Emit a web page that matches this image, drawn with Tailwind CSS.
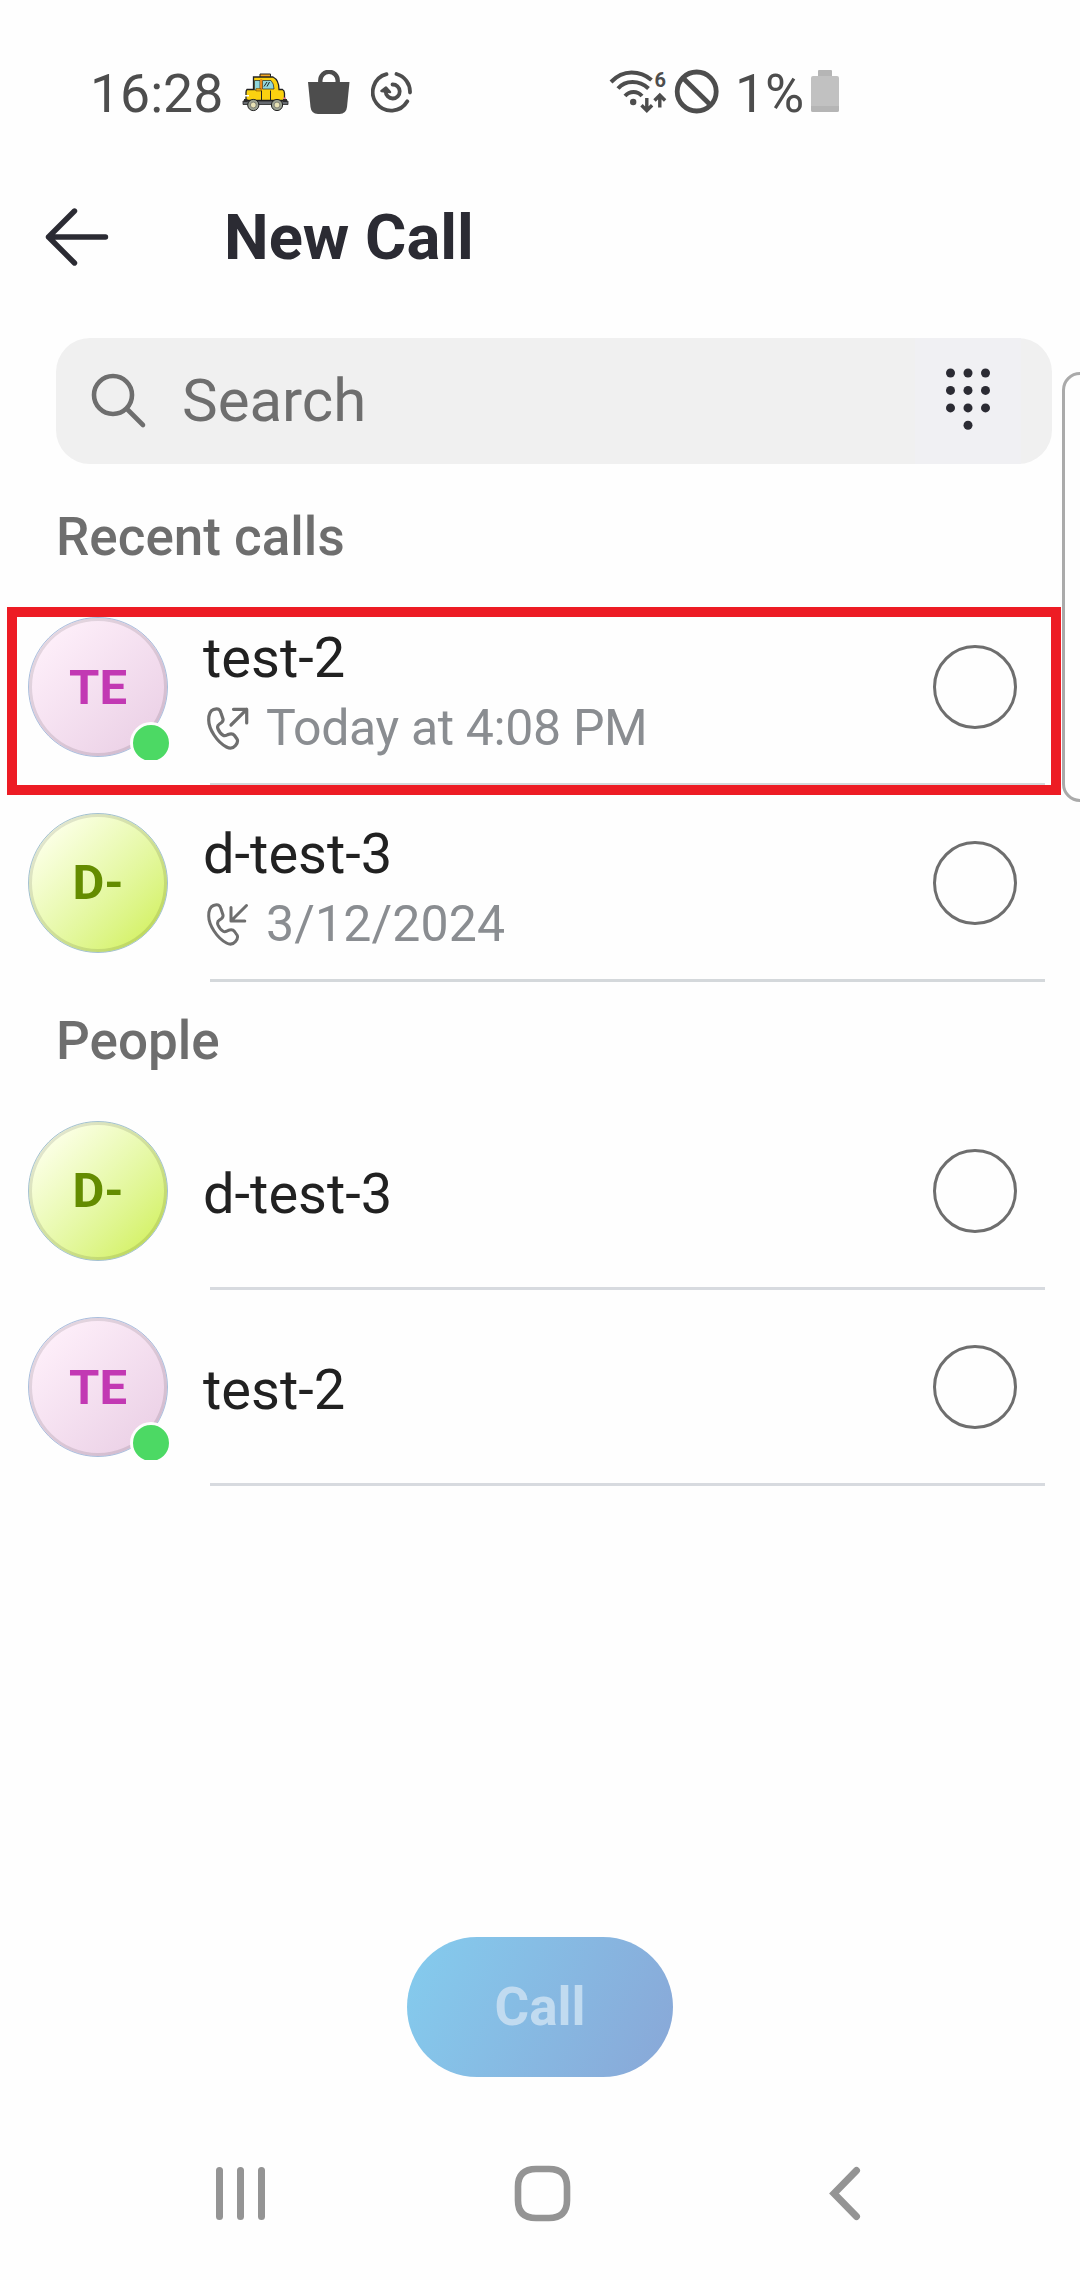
<!DOCTYPE html>
<html lang="en">
<head>
<meta charset="utf-8">
<title>New Call</title>
<script src="https://cdn.jsdelivr.net/npm/@tailwindcss/browser@4"></script>
</head>
<body class="bg-[#fefefe]">
<div class="relative flex h-[2280px] w-[1080px] flex-col overflow-hidden bg-[#fefefe] font-['Roboto',sans-serif]">

  <!-- Status bar -->
  <div class="flex h-[138px] shrink-0 pt-[62px] pl-[90px] text-[53.500px] leading-[64px] text-[#4d4d4d]">
    <span class="w-[152px] shrink-0">16:28</span>
    <svg class="mt-[10px] mr-[19px] h-[40px] w-[47px] shrink-0" viewBox="0 0 47 40">
      <path d="M18 5.500V2h10.500v3.500" fill="#f5a623" stroke="#222" stroke-width="1"/>
      <path d="M5 17.500h6.500V5H31q6 3 6 12.500h3.500q2 1 2 4V28.500H4v-8q0-2 1-3z" fill="#fbd110" stroke="#222" stroke-width="1.300"/>
      <path d="M12.500 8.500H18v9.500h-5.500zM20.500 8.500H29q3 3 3 8.500H20.500z" fill="#8fd6dc" stroke="#222" stroke-width=".7"/>
      <path d="M19.200 7v11" stroke="#f08a1c" stroke-width="2"/>
      <path d="M22 14.500l3-4.500M25 14.500l2.500-4.500M28.500 18.500v10M19.500 18.500v10" stroke="#222" stroke-width="1"/>
      <path d="M14 16.500h5V19h-5z" fill="#e5a313" stroke="#7a5200" stroke-width=".6"/>
      <path d="M1 29h45v3.500H1z" fill="#666a70" stroke="#222" stroke-width=".8"/>
      <path d="M2 27h3.500v3H2zM41 27h4v3h-4z" fill="#2c2c2c"/>
      <path d="M3 23h4v1.500H3z" fill="#fff"/><path d="M41 25.500h3v1.500h-3z" fill="#e98392"/>
      <g fill="#9ca293" stroke="#222" stroke-width="1"><circle cx="11.300" cy="33" r="5.600"/><circle cx="35" cy="33" r="5.600"/></g>
      <g fill="#e8e3b5" stroke="#555" stroke-width=".6"><circle cx="11.300" cy="33" r="2.900"/><circle cx="35" cy="33" r="2.900"/></g>
    </svg>
    <svg class="mt-[8px] mr-[21px] h-[44px] w-[42px] shrink-0" viewBox="0 0 42 44">
      <path d="M12.300 14V10.500a8.700 8.700 0 0 1 17.400 0V14" fill="none" stroke="#4d4d4d" stroke-width="4.400"/>
      <path d="M0 12h41.500L39 37q-.8 7-7.500 7H10q-6.700 0-7.500-7z" fill="#4d4d4d"/>
    </svg>
    <svg class="mt-[8px] h-[44px] w-[42px] shrink-0" viewBox="0 0 42 44" fill="none" stroke="#4d4d4d" stroke-width="3.800" stroke-linecap="round">
      <path d="M25.500 4A18.500 18.500 0 0 1 39 22.500M36.300 31.300A18.500 18.500 0 1 1 15.500 4.200"/>
      <path d="M21.500 14.500A7 7 0 1 1 14.700 21.500"/>
      <path d="M10.500 21l4.500-3.500 4 4.500z" fill="#4d4d4d" stroke-width="2.500" stroke-linejoin="round"/>
    </svg>
    <svg class="mt-[8px] ml-[196px] h-[46px] w-[132px] shrink-0 overflow-visible" viewBox="0 0 132 46">
      <g fill="none" stroke="#4d4d4d" stroke-width="4">
        <path d="M2 12Q11 2.500 22.500 2.500T42.500 10M9 18.500Q14.500 12 23.500 12T39.500 18.500M16 26Q19.500 22 24.500 22T33 26"/>
      </g>
      <circle cx="24.200" cy="32" r="3.200" fill="#4d4d4d"/>
      <text x="45.500" y="16.500" font-size="20" font-weight="700" fill="#4d4d4d">6</text>
      <path d="M37.800 28v12M32.500 35.200l5.300 5.300 5.300-5.300M50.800 37.500V25M45.500 30.500l5.300-5.300 5.300 5.300" fill="none" stroke="#4d4d4d" stroke-width="3.400"/>
      <g fill="none" stroke="#4d4d4d" stroke-width="4.800"><circle cx="87.700" cy="21.500" r="19.500"/><path d="M73.500 7.500l28.500 28"/></g>
    </svg>
    <span class="-ml-[6px] w-[76px] shrink-0 whitespace-nowrap">1%</span>
    <svg class="mt-[8px] h-[42px] w-[28px] shrink-0" viewBox="0 0 28 42">
      <path d="M8 0h12q1 0 1 1v5H7V1q0-1 1-1z" fill="#b5b5b5"/>
      <rect y="6" width="28" height="36" rx="2" fill="#c1c1c1"/>
      <path d="M0 36h28v4q0 2-2 2H2q-2 0-2-2z" fill="#b5b5b5"/>
    </svg>
  </div>

  <!-- Header -->
  <header class="flex h-[200px] shrink-0 items-center pl-[42px]">
    <svg class="h-[62px] w-[70px]" viewBox="0 0 70 62" fill="none" stroke="#2b2b33" stroke-width="5.400" stroke-linecap="round" stroke-linejoin="round">
      <path d="M63.500 30H6.500M32.500 4L6.500 30l26 26"/>
    </svg>
    <h1 class="ml-[112px] pb-[2px] text-[63.300px] leading-[74px] font-bold text-[#2b2b33]">New Call</h1>
  </header>

  <!-- Search -->
  <div class="mr-[28px] ml-[56px] flex h-[126px] shrink-0 items-center rounded-[34px] bg-[#f0f0f0] pl-[34px]">
    <svg class="h-[58px] w-[58px]" viewBox="0 0 58 58" fill="none" stroke="#6e6e6e" stroke-width="4.600" stroke-linecap="round">
      <circle cx="23" cy="23" r="19"/><path d="M37 37l16 16"/>
    </svg>
    <span class="ml-[34px] flex-1 text-[60px] leading-[70px] text-[#6e6e6e]">Search</span>
    <div class="mr-[31px] flex h-full w-[106px] items-center justify-center bg-[#f0f0f3]">
      <svg class="mb-[4px] h-[64px] w-[46px]" viewBox="0 0 46 64" fill="#2b2b33">
        <circle cx="5.500" cy="6" r="4.500"/><circle cx="23" cy="6" r="4.500"/><circle cx="40.500" cy="6" r="4.500"/>
        <circle cx="5.500" cy="23.400" r="4.500"/><circle cx="23" cy="23.400" r="4.500"/><circle cx="40.500" cy="23.400" r="4.500"/>
        <circle cx="5.500" cy="40.900" r="4.500"/><circle cx="23" cy="40.900" r="4.500"/><circle cx="40.500" cy="40.900" r="4.500"/>
        <circle cx="23" cy="58.300" r="4.500"/>
      </svg>
    </div>
  </div>

  <!-- Recent calls -->
  <h2 class="flex h-[126px] shrink-0 items-center pt-[20px] pl-[56px] text-[53px] leading-[62px] font-medium text-[#6e6e6e]">Recent calls</h2>

  <div class="flex h-[196px] shrink-0 pl-[28px]">
    <div class="relative mt-[27px] flex size-[140px] shrink-0 items-center justify-center rounded-full border border-[#a9bedd] bg-linear-135 from-[#fdeef9] from-15% to-[#ecd2e7] to-85% pt-px text-[49px] font-bold text-[#c239b3] inset-ring-3 inset-ring-black/10">TE
      <div class="absolute top-[104px] left-[101px] h-[38px] w-[42px] overflow-hidden"><div class="size-[42px] rounded-full border-[3px] border-[#fefefe] bg-[#4cd964]"></div></div>
    </div>
    <div class="ml-[35px] min-w-0 flex-1 pt-[35px]">
      <div class="text-[56px] leading-[66px] text-[#212121]">test-2</div>
      <div class="mt-[7px] flex items-center pl-[2px] text-[50px] leading-[60px] text-[#8a8d91]">
        <svg class="h-[46px] w-[46px]" viewBox="0 0 46 46" fill="none" stroke="#6e6e6e" stroke-width="3.200" stroke-linecap="round" stroke-linejoin="round">
          <path d="M3.700 15C3.700 9 5 5.800 8.500 4.500 13 3 15 4 16 8L18 14C18.600 16.500 17 17.500 14.500 19 12.500 20.200 12 21.500 13 24 14.500 27.500 16.500 29.500 18.500 30.500 20 31.200 21 30.500 23 29.500 26 28.300 28 28.500 29.500 30.500L32 34C33.500 36.500 32.500 38 30.500 40.500 28 43.500 25 43.800 21.500 42 12 37 3.700 24 3.700 15Z"/>
          <path d="M28.500 4.300H41.700V18M41.700 4.300L26 20"/>
        </svg>
        <span class="ml-[15px] tracking-[-0.350px]">Today at 4:08 PM</span>
      </div>
    </div>
    <div class="mt-[55px] mr-[63px] size-[84px] shrink-0 rounded-full border-[3px] border-[#6e6e6e]"></div>
  </div>

  <div class="flex h-[196px] shrink-0 pl-[28px]">
    <div class="mt-[27px] flex size-[140px] shrink-0 items-center justify-center rounded-full border border-[#a3c1d0] bg-linear-135 from-[#fbffe4] from-15% to-[#d6f26c] to-85% text-[49px] font-bold text-[#648c00] inset-ring-3 inset-ring-black/10">D-</div>
    <div class="ml-[35px] min-w-0 flex-1 pt-[35px]">
      <div class="text-[56px] leading-[66px] text-[#212121]">d-test-3</div>
      <div class="mt-[7px] flex items-center pl-[2px] text-[50px] leading-[60px] text-[#8a8d91]">
        <svg class="h-[46px] w-[46px]" viewBox="0 0 46 46" fill="none" stroke="#6e6e6e" stroke-width="3" stroke-linecap="round" stroke-linejoin="round">
          <path d="M3.700 15C3.700 9 5 5.800 8.500 4.500 13 3 15 4 16 8L18 14C18.600 16.500 17 17.500 14.500 19 12.500 20.200 12 21.500 13 24 14.500 27.500 16.500 29.500 18.500 30.500 20 31.200 21 30.500 23 29.500 26 28.300 28 28.500 29.500 30.500L32 34C33.500 36.500 32.500 38 30.500 40.500 28 43.500 25 43.800 21.500 42 12 37 3.700 24 3.700 15Z"/>
          <path d="M26 6.500V20H39.800M26 20L41.500 4.500"/>
        </svg>
        <span class="ml-[15px] tracking-[0.150px]">3/12/2024</span>
      </div>
      <div class="mt-[25px] ml-[7px] h-[3px] w-[835px] bg-[#d4d8db]"></div>
    </div>
    <div class="mt-[55px] mr-[63px] size-[84px] shrink-0 rounded-full border-[3px] border-[#6e6e6e]"></div>
  </div>

  <!-- People -->
  <h2 class="flex h-[112px] shrink-0 items-center pt-[6px] pl-[56px] text-[53px] leading-[62px] font-medium text-[#6e6e6e]">People</h2>

  <div class="flex h-[196px] shrink-0 pl-[28px]">
    <div class="mt-[27px] flex size-[140px] shrink-0 items-center justify-center rounded-full border border-[#a3c1d0] bg-linear-135 from-[#fbffe4] from-15% to-[#d6f26c] to-85% text-[49px] font-bold text-[#648c00] inset-ring-3 inset-ring-black/10">D-</div>
    <div class="ml-[35px] min-w-0 flex-1 pt-[67px]">
      <div class="text-[56px] leading-[66px] text-[#212121]">d-test-3</div>
      <div class="mt-[60px] ml-[7px] h-[3px] w-[835px] bg-[#d7dadf]"></div>
    </div>
    <div class="mt-[55px] mr-[63px] size-[84px] shrink-0 rounded-full border-[3px] border-[#6e6e6e]"></div>
  </div>

  <div class="flex h-[196px] shrink-0 pl-[28px]">
    <div class="relative mt-[27px] flex size-[140px] shrink-0 items-center justify-center rounded-full border border-[#a9bedd] bg-linear-135 from-[#fdeef9] from-15% to-[#ecd2e7] to-85% pt-px text-[49px] font-bold text-[#c239b3] inset-ring-3 inset-ring-black/10">TE
      <div class="absolute top-[104px] left-[101px] h-[38px] w-[42px] overflow-hidden"><div class="size-[42px] rounded-full border-[3px] border-[#fefefe] bg-[#4cd964]"></div></div>
    </div>
    <div class="ml-[35px] min-w-0 flex-1 pt-[67px]">
      <div class="text-[56px] leading-[66px] text-[#212121]">test-2</div>
      <div class="mt-[60px] ml-[7px] h-[3px] w-[835px] bg-[#d7dadf]"></div>
    </div>
    <div class="mt-[55px] mr-[63px] size-[84px] shrink-0 rounded-full border-[3px] border-[#6e6e6e]"></div>
  </div>

  <!-- Call button -->
  <div class="mt-[451px] flex shrink-0 justify-center">
    <button class="h-[140px] w-[266px] rounded-full bg-linear-[115deg] from-[#84ccee] to-[#89a7d7] pt-[2px] text-[53px] font-bold text-[#c1dbf0]">Call</button>
  </div>

  <!-- System navigation -->
  <nav class="mt-[84px] flex shrink-0 pl-[212px]">
    <svg class="h-[64px] w-[58px]" viewBox="0 0 58 64" stroke="#949494" stroke-width="7" stroke-linecap="round"><path d="M7.500 9.500v46M28.500 9.500v46M49.500 9.500v46"/></svg>
    <svg class="ml-[240px] h-[64px] w-[66px]" viewBox="0 0 66 64" fill="none" stroke="#949494" stroke-width="6.600"><path d="M8 25.500C8 14 14 8 26 8H39C51 8 57 14 57 25.500V39.500C57 51 51 57 39 57H26C14 57 8 51 8 39.500Z"/></svg>
    <svg class="ml-[246px] h-[64px] w-[50px]" viewBox="0 0 50 64" fill="none" stroke="#949494" stroke-width="7" stroke-linecap="round"><path d="M34.500 9.500L12 32.500l22.500 23"/></svg>
  </nav>

  <!-- Highlight over the first recent call, with that row's divider at its foot -->
  <div class="absolute top-[783px] left-[210px] h-[3px] w-[835px] bg-[#d4d8db]"></div>
  <div class="absolute top-[607px] left-[7px] h-[188px] w-[1054px] border-[10px] border-[#ed1c24]"></div>
  <!-- Edge panel handle -->
  <div class="absolute top-[372px] left-[1062px] h-[430px] w-[40px] rounded-[18px] border-[3px] border-[#aaaaaa]"></div>
</div>
</body>
</html>
